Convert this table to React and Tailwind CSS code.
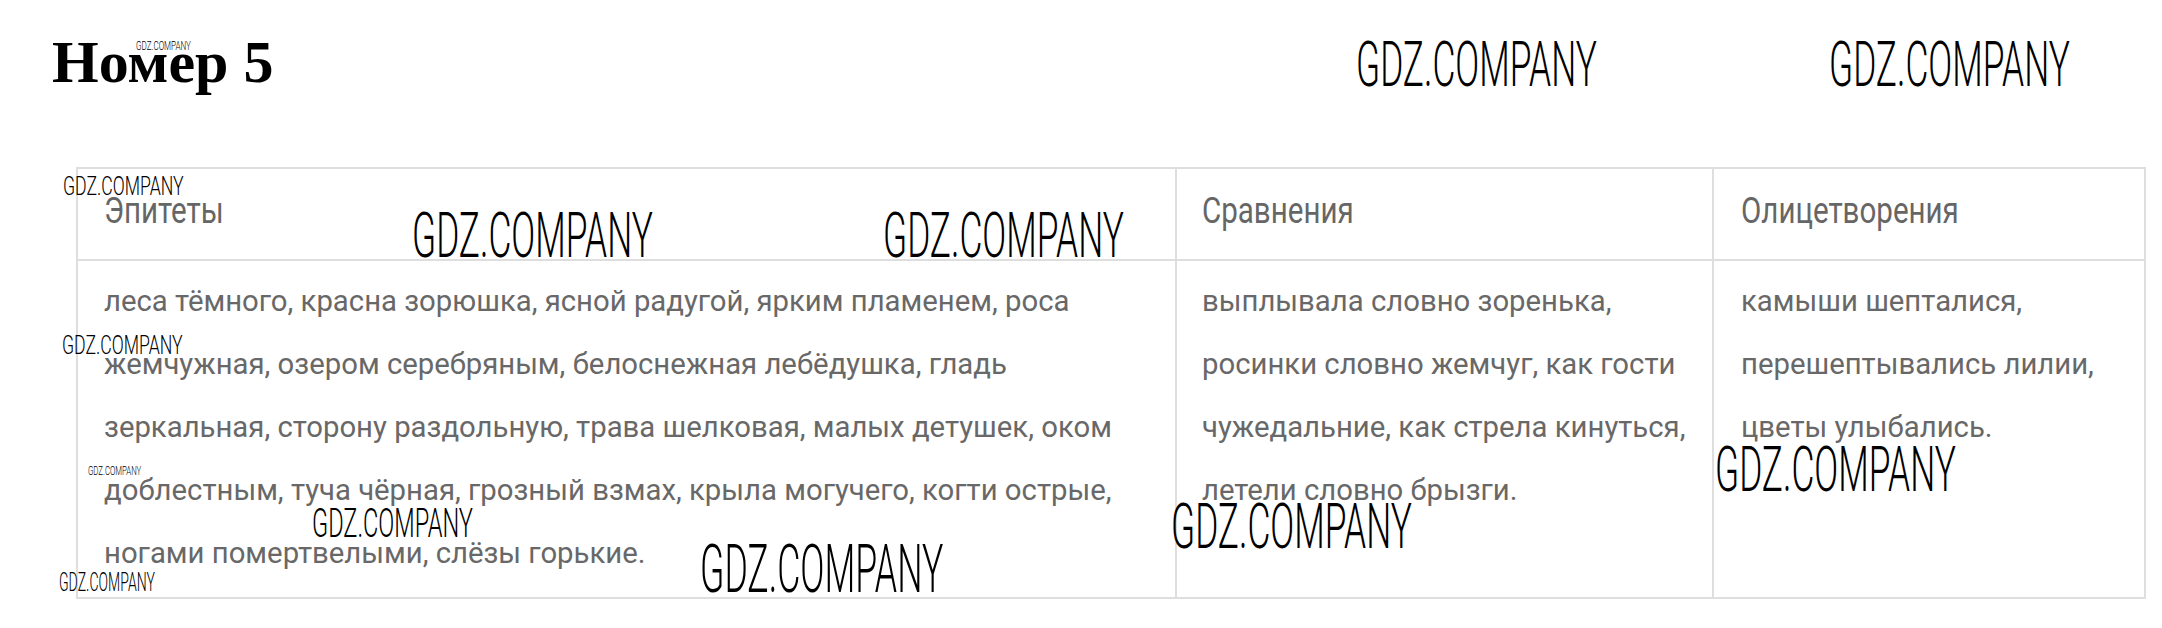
import React from 'react';

const epithets = [
  'леса тёмного, красна зорюшка, ясной радугой, ярким пламенем, роса',
  'жемчужная, озером серебряным, белоснежная лебёдушка, гладь',
  'зеркальная, сторону раздольную, трава шелковая, малых детушек, оком',
  'доблестным, туча чёрная, грозный взмах, крыла могучего, когти острые,',
  'ногами помертвелыми, слёзы горькие.',
];

const comparisons = [
  'выплывала словно зоренька,',
  'росинки словно жемчуг, как гости',
  'чужедальние, как стрела кинуться,',
  'летели словно брызги.',
];

const personifications = [
  'камыши шепталися,',
  'перешептывались лилии,',
  'цветы улыбались.',
];

const Lines = ({ items }) => (
  <div className="text-[29.3px] leading-[63px] text-[#686868] font-['Roboto',sans-serif]">
    {items.map((line) => (
      <div key={line} className="whitespace-nowrap">{line}</div>
    ))}
  </div>
);

const Head = ({ children }) => (
  <div className="origin-left scale-x-[0.82] text-[36px] leading-none text-[#666] font-['Roboto',sans-serif] whitespace-nowrap">
    {children}
  </div>
);

const App = () => {
  return (
    <div className="relative w-[2162px] h-[628px] bg-white overflow-hidden">
      <h1 className="pt-[32px] pl-[52px] text-[60px] leading-none font-bold text-black font-['Liberation_Serif',serif]">
        Номер 5
      </h1>

      {/* Table */}
      <div className="ml-[76px] mt-[75px] w-[2070px] border-2 border-[#dedede]">
        <div className="flex h-[92px] border-b-2 border-[#dedede]">
          <div className="w-[1099px] shrink-0 border-r-2 border-[#dedede] pl-[26px] pt-[24px]">
            <Head>Эпитеты</Head>
          </div>
          <div className="w-[537px] shrink-0 border-r-2 border-[#dedede] pl-[25px] pt-[24px]">
            <Head>Сравнения</Head>
          </div>
          <div className="flex-1 pl-[27px] pt-[24px]">
            <Head>Олицетворения</Head>
          </div>
        </div>
        <div className="flex h-[336px]">
          <div className="w-[1099px] shrink-0 border-r-2 border-[#dedede] pl-[26px] pt-[9px]">
            <Lines items={epithets} />
          </div>
          <div className="w-[537px] shrink-0 border-r-2 border-[#dedede] pl-[25px] pt-[9px]">
            <Lines items={comparisons} />
          </div>
          <div className="flex-1 pl-[27px] pt-[9px]">
            <Lines items={personifications} />
          </div>
        </div>
      </div>

      {/* Watermarks */}
      <div className="font-['Roboto',sans-serif] font-light text-black leading-none whitespace-nowrap">
        <span className="absolute left-[136px] top-[40px] origin-left scale-x-[0.67] text-[12px]">GDZ.COMPANY</span>
        <span className="absolute left-[1356px] top-[33px] origin-left scale-x-[0.56] text-[63px]">GDZ.COMPANY</span>
        <span className="absolute left-[1829px] top-[33px] origin-left scale-x-[0.56] text-[63px]">GDZ.COMPANY</span>
        <span className="absolute left-[63px] top-[173px] origin-left scale-x-[0.68] text-[26px]">GDZ.COMPANY</span>
        <span className="absolute left-[412px] top-[204px] origin-left scale-x-[0.56] text-[63px]">GDZ.COMPANY</span>
        <span className="absolute left-[883px] top-[204px] origin-left scale-x-[0.56] text-[63px]">GDZ.COMPANY</span>
        <span className="absolute left-[62px] top-[332px] origin-left scale-x-[0.68] text-[26px]">GDZ.COMPANY</span>
        <span className="absolute left-[88px] top-[465px] origin-left scale-x-[0.65] text-[12px]">GDZ.COMPANY</span>
        <span className="absolute left-[312px] top-[503px] origin-left scale-x-[0.575] text-[41px]">GDZ.COMPANY</span>
        <span className="absolute left-[59px] top-[569px] origin-left scale-x-[0.54] text-[26px]">GDZ.COMPANY</span>
        <span className="absolute left-[700px] top-[537px] origin-left scale-x-[0.54] text-[66px]">GDZ.COMPANY</span>
        <span className="absolute left-[1171px] top-[495px] origin-left scale-x-[0.56] text-[63px]">GDZ.COMPANY</span>
        <span className="absolute left-[1715px] top-[438px] origin-left scale-x-[0.56] text-[63px]">GDZ.COMPANY</span>
      </div>
    </div>
  );
};

export default App;
